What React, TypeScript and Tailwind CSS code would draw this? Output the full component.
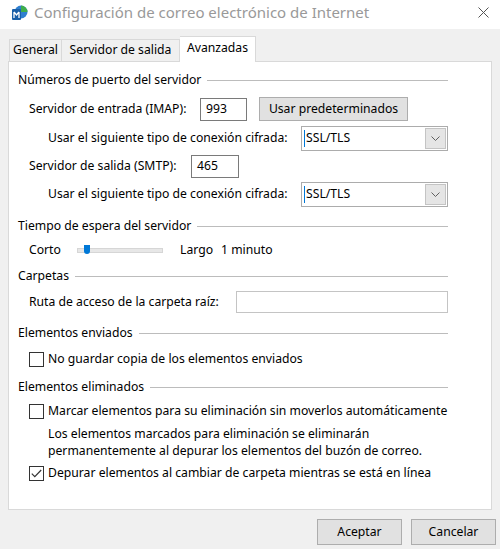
import React from "react";

const font = "font-['Noto_Sans','Open_Sans',sans-serif]";

function Section({ title }: { title: string }) {
  return (
    <div className="h-[20px] flex items-center pr-[43px]">
      <span className="whitespace-nowrap">{title}</span>
      <div className="flex-1 ml-[6px] h-px bg-[#bcbcbc]" />
    </div>
  );
}

function Select({ value }: { value: string }) {
  return (
    <div className="w-[147px] h-[25px] border border-[#acacac] bg-white flex items-center">
      <div className="w-px h-[17px] bg-[#0078d7] ml-[2px]" />
      <span className="ml-[1px] flex-1">{value}</span>
      <div className="w-[21px] h-[21px] mr-px bg-[#e5e5e5] border border-[#c4c4c4] flex items-center justify-center">
        <svg width="9" height="5" viewBox="0 0 9 5" fill="none" stroke="#606060" strokeWidth="1">
          <path d="M0.5 0.5 L4.5 4.5 L8.5 0.5" />
        </svg>
      </div>
    </div>
  );
}

function Checkbox({ checked, label }: { checked?: boolean; label: string }) {
  return (
    <div className="h-[20px] flex items-center pl-[11px]">
      <div className="w-[15px] h-[15px] border border-[#333] bg-white flex items-center justify-center">
        {checked && (
          <svg width="11" height="9" viewBox="0 0 11 9" fill="none" stroke="#333" strokeWidth="1.2">
            <path d="M0.8 4.6 L3.8 7.6 L10.2 1" />
          </svg>
        )}
      </div>
      <span className="ml-[4px] whitespace-nowrap">{label}</span>
    </div>
  );
}

function AppIcon() {
  return (
    <svg width="17" height="18" viewBox="0 0 17 18">
      <circle cx="10" cy="8" r="6.5" fill="#2f7fcf" />
      <path d="M10 1.5 A6.5 6.5 0 0 1 16.5 8 L10 8 Z" fill="#3fae49" />
      <rect x="1" y="5" width="9" height="11" rx="1" fill="#1a5fa8" />
      <path d="M3 8 L3 14 M8 8 L8 14 M3 8 L5.5 11 L8 8" stroke="#fff" strokeWidth="1.3" fill="none" />
    </svg>
  );
}

export default function App() {
  return (
    <div className={`w-[500px] h-[549px] bg-[#f0f0f0] text-[12.2px] text-black overflow-hidden ${font}`}>
      {/* title bar */}
      <div className="h-[29px] bg-white flex items-center">
        <div className="ml-[11px] mt-[-3px]">
          <AppIcon />
        </div>
        <span className="ml-[6px] mt-[-4px] text-[15px] text-[#999999] flex-1 whitespace-nowrap">
          Configuración de correo electrónico de Internet
        </span>
        <svg className="mr-[11px] mt-[-4px]" width="11" height="11" viewBox="0 0 11 11" stroke="#555" strokeWidth="1">
          <path d="M0.5 0.5 L10.5 10.5 M10.5 0.5 L0.5 10.5" />
        </svg>
      </div>

      {/* tabs */}
      <div className="mt-[7px] ml-[9px] h-[25px] flex items-end relative z-10">
        <div className="h-[22px] w-[53px] flex items-center justify-center border border-b-0 border-[#d9d9d9] bg-[#f0f0f0]">General</div>
        <div className="h-[22px] w-[118px] flex items-center justify-center border border-b-0 border-l-0 border-[#d9d9d9] bg-[#f0f0f0]">Servidor de salida</div>
        <div className="h-[26px] w-[76px] mb-[-1px] pb-[3px] flex items-center justify-center border border-b-0 border-l-0 border-[#d9d9d9] bg-white">Avanzadas</div>
      </div>

      {/* panel */}
      <div className="ml-[8px] w-[484px] h-[449px] border border-[#d9d9d9] bg-white pl-[9px]">
        <div className="h-[8px]" />
        <Section title="Números de puerto del servidor" />
        <div className="h-[7px]" />
        <div className="h-[24px] flex items-center pl-[11px]">
          <span className="w-[171px] whitespace-nowrap">Servidor de entrada (IMAP):</span>
          <div className="w-[47px] h-[23px] border border-[#7a7a7a] flex items-center pl-[5px]">993</div>
          <div className="ml-[12px] w-[149px] h-[24px] border border-[#adadad] bg-[#e1e1e1] flex items-center justify-center">
            Usar predeterminados
          </div>
        </div>
        <div className="h-[5px]" />
        <div className="h-[25px] flex items-center pl-[30px] pr-[43px]">
          <span className="flex-1 whitespace-nowrap">Usar el siguiente tipo de conexión cifrada:</span>
          <Select value="SSL/TLS" />
        </div>
        <div className="h-[4px]" />
        <div className="h-[23px] flex items-center pl-[11px]">
          <span className="w-[162px] whitespace-nowrap">Servidor de salida (SMTP):</span>
          <div className="w-[48px] h-[23px] border border-[#7a7a7a] flex items-center pl-[5px]">465</div>
        </div>
        <div className="h-[4px]" />
        <div className="h-[25px] flex items-center pl-[30px] pr-[43px]">
          <span className="flex-1 whitespace-nowrap">Usar el siguiente tipo de conexión cifrada:</span>
          <Select value="SSL/TLS" />
        </div>
        <div className="h-[9px]" />
        <Section title="Tiempo de espera del servidor" />
        <div className="h-[4px]" />
        <div className="h-[20px] flex items-center pl-[11px]">
          <span className="w-[48px]">Corto</span>
          <div className="relative w-[86px] h-[5px] bg-[#e7e7e7] border border-[#d6d6d6]">
            <div className="absolute left-[6px] top-[-4px] w-[6px] h-[9px] bg-[#0078d7] rounded-b-[3px]" />
          </div>
          <span className="ml-[17px]">Largo</span>
          <span className="ml-[8px]">1 minuto</span>
        </div>
        <div className="h-[6px]" />
        <Section title="Carpetas" />
        <div className="h-[5px]" />
        <div className="h-[22px] flex items-center pl-[11px] pr-[43px]">
          <span className="w-[207px] whitespace-nowrap">Ruta de acceso de la carpeta raíz:</span>
          <div className="flex-1 h-[22px] border border-[#c4c4c4]" />
        </div>
        <div className="h-[10px]" />
        <Section title="Elementos enviados" />
        <div className="h-[6px]" />
        <Checkbox label="No guardar copia de los elementos enviados" />
        <div className="h-[8px]" />
        <Section title="Elementos eliminados" />
        <div className="h-[4px]" />
        <Checkbox label="Marcar elementos para su eliminación sin moverlos automáticamente" />
        <div className="h-[4px]" />
        <div className="pl-[30px] leading-[17px] h-[35px]">
          <div className="whitespace-nowrap">Los elementos marcados para eliminación se eliminarán</div>
          <div className="whitespace-nowrap">permanentemente al depurar los elementos del buzón de correo.</div>
        </div>
        <div className="h-[3px]" />
        <Checkbox checked label="Depurar elementos al cambiar de carpeta mientras se está en línea" />
      </div>

      {/* buttons */}
      <div className="mt-[9px] flex justify-end pr-[4px] gap-[9px]">
        <div className="w-[85px] h-[26px] border border-[#adadad] bg-[#e1e1e1] flex items-center justify-center">Aceptar</div>
        <div className="w-[85px] h-[26px] border border-[#adadad] bg-[#e1e1e1] flex items-center justify-center">Cancelar</div>
      </div>
    </div>
  );
}
